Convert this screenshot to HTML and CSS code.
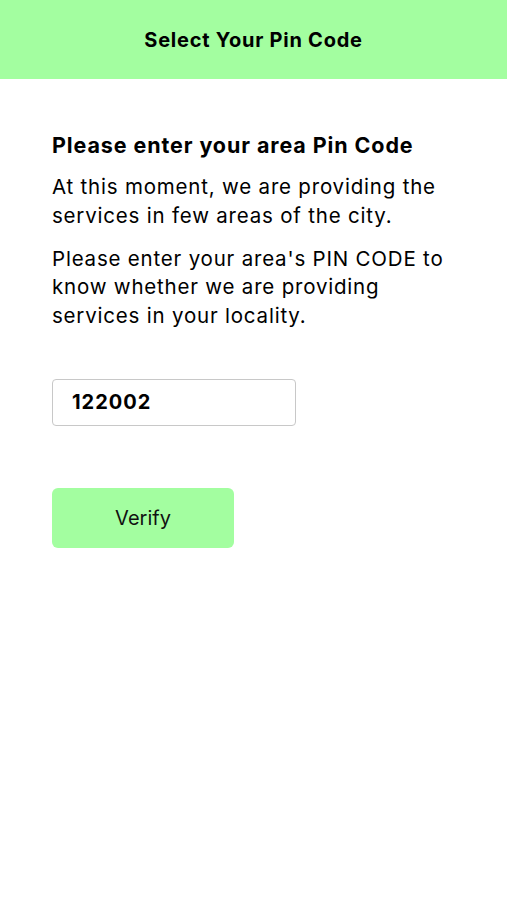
FILE: index.html
```html
<!DOCTYPE html>
<html>
<head>
<meta charset="utf-8">
<link rel="stylesheet" href="styles.css">
</head>
<body>
<header class="topbar"><h1 class="topbar-title">Select Your Pin Code</h1></header>
<main class="content">
  <h2 class="heading">Please enter your area Pin Code</h2>
  <p class="para">At this moment, we are providing the services in few areas of the city.</p>
  <p class="para">Please enter your area's PIN CODE to know whether we are providing services in your locality.</p>
  <div class="pin-box"><span class="pin-value">122002</span></div>
  <button class="verify-btn">Verify</button>
</main>
</body>
</html>
```
FILE: styles.css
```css
* { box-sizing: border-box; }
html, body { margin: 0; padding: 0; background: #fff; }
body { font-family: Inter, "Noto Sans", sans-serif; color: #000; width: 507px; }
.topbar {
  height: 79px;
  background: #a3fea0;
  display: flex;
  align-items: center;
  justify-content: center;
}
.topbar-title { margin: 0; font-size: 20px; font-weight: 700; letter-spacing: 0.75px; }
.content {
  padding: 52px 55px 0 52px;
  display: flex; flex-direction: column; align-items: flex-start;
}
.heading { margin: 0 0 14px 0; font-size: 21.5px; font-weight: 700; line-height: 28px; letter-spacing: 0.9px; }
.para { margin: 0; font-size: 20.5px; line-height: 28.5px; font-weight: 400; letter-spacing: 0.8px; }
.para + .para { margin-top: 14.5px; }
.pin-box {
  margin-top: 48.5px;
  width: 244px; height: 47px;
  border: 1.5px solid #c8c8c8;
  border-radius: 4px;
  display: flex; align-items: center;
  padding-left: 19px;
}
.pin-value { font-size: 20px; font-weight: 700; letter-spacing: 1px; }
.verify-btn {
  margin-top: 62px;
  width: 182px; height: 60px;
  border: none; border-radius: 6px;
  background: #a3fea0;
  font-family: inherit; font-size: 20px; color: #111;
}
```
